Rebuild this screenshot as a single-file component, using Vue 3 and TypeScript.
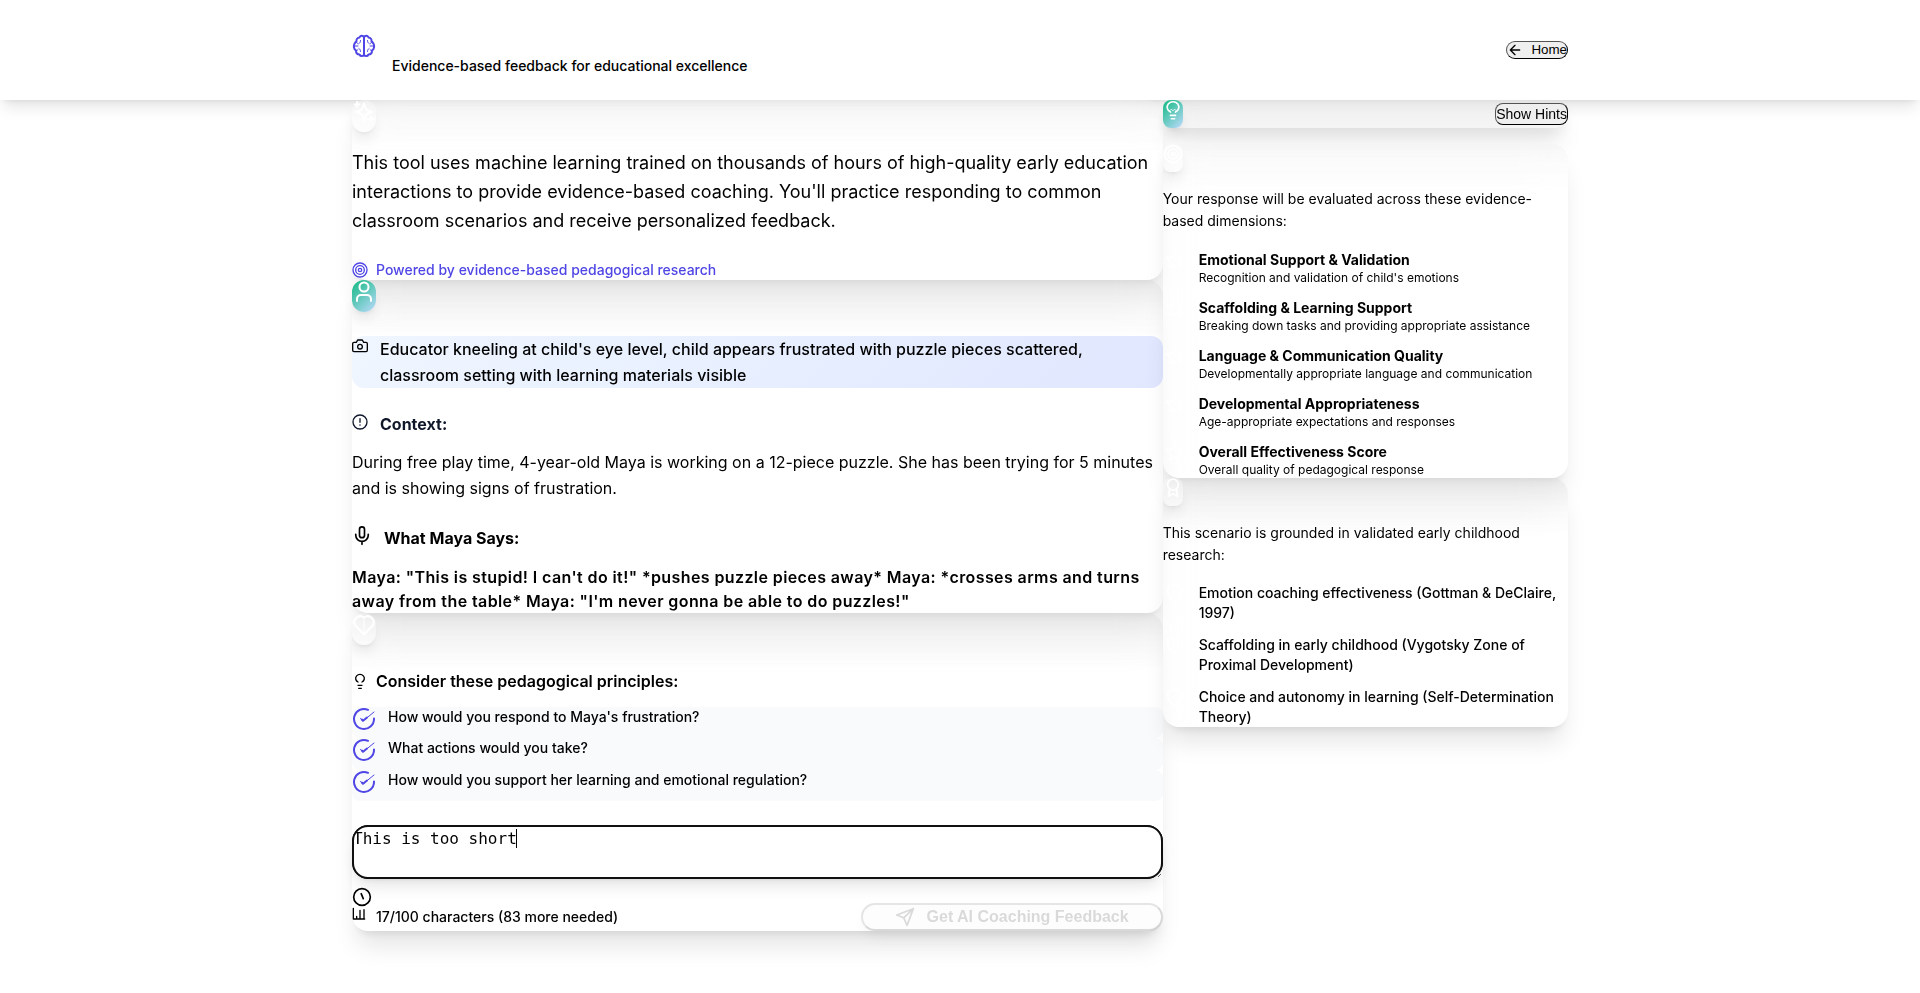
<script setup lang="ts">
import { computed, nextTick, onMounted, ref } from 'vue'

const answer = ref('This is too short')
const box = ref<HTMLTextAreaElement | null>(null)

const caretColumn = computed(() => `${answer.value.length}ch`)

const questions = [
  "How would you respond to Maya's frustration?",
  'What actions would you take?',
  'How would you support her learning and emotional regulation?',
]

const dimensions = [
  { name: 'Emotional Support & Validation', text: "Recognition and validation of child's emotions" },
  { name: 'Scaffolding & Learning Support', text: 'Breaking down tasks and providing appropriate assistance' },
  { name: 'Language & Communication Quality', text: 'Developmentally appropriate language and communication' },
  { name: 'Developmental Appropriateness', text: 'Age-appropriate expectations and responses' },
  { name: 'Overall Effectiveness Score', text: 'Overall quality of pedagogical response' },
]

const sources = [
  'Emotion coaching effectiveness (Gottman & DeClaire, 1997)',
  'Scaffolding in early childhood (Vygotsky Zone of Proximal Development)',
  'Choice and autonomy in learning (Self-Determination Theory)',
]

onMounted(async () => {
  await nextTick()
  const el = box.value
  if (el) {
    el.focus({ preventScroll: true })
    el.setSelectionRange(el.value.length, el.value.length)
  }
})
</script>

<template>
  <div class="page">
    <header class="top">
      <div class="wrap top-row">
        <div class="brand">
          <svg class="i24 indigo brand-icon" viewBox="0 0 24 24">
            <path d="M12 2.500v19" />
            <path d="M12 3.500C11.500 1.500 8.500 1 7.500 3.500 5.500 3.500 4 5.500 4.500 7.500 2.500 8.500 1.500 11.500 2 13.500c.3 1.500 1.200 2.500 2 3 0 2.500 1.500 4 3.500 4 1 2.300 4 2 4.500 0" />
            <path d="M12 3.500c.5-2 3.500-2.500 4.500 0 2 0 3.500 2 3 4 2 1 3 4 2.500 6-.3 1.500-1.200 2.500-2 3 0 2.500-1.500 4-3.500 4-1 2.300-4 2-4.500 0" />
            <path class="thin" d="M4.500 8c0 1 .6 1.500 1.500 1.800M4 16.500c.8 0 1.500-.3 2-.8M8.500 6.500C8.500 8 8 9 7 9.500M8.500 17.500c0-1.500-.5-2.500-1.500-3M19.500 8c0 1-.6 1.500-1.500 1.800M20 16.500c-.8 0-1.500-.3-2-.8M15.500 6.500c0 1.500.5 2.500 1.500 3M15.500 17.500c0-1.500.5-2.500 1.500-3M2.500 12H6M21.500 12H18" />
          </svg>
          <p class="tagline">Evidence-based feedback for educational excellence</p>
        </div>
        <button class="home" type="button">
          <svg class="i16" viewBox="0 0 24 24"><path d="M19 12H5M12 19l-7-7 7-7" /></svg>
          Home
        </button>
      </div>
    </header>

    <main class="wrap grid">
      <div class="col">
        <section class="card">
          <div class="badge pale">
            <svg class="i24" viewBox="0 0 24 24">
              <path d="M12 3.500l1.700 5a2.500 2.500 0 0 0 1.600 1.600l5 1.900-5 1.700a2.500 2.500 0 0 0-1.600 1.600L12 20.500l-1.700-5.200a2.500 2.500 0 0 0-1.600-1.600l-5-1.700 5-1.900a2.500 2.500 0 0 0 1.600-1.600zM5 2v5M2.500 4.500h5M19 16.500v5M16.500 19h5" />
            </svg>
          </div>
          <p class="intro">
            This tool uses machine learning trained on thousands of hours of high-quality early education
            interactions to provide evidence-based coaching. You'll practice responding to common classroom
            scenarios and receive personalized feedback.
          </p>
          <p class="powered">
            <svg class="i16" viewBox="0 0 24 24"><circle cx="12" cy="12" r="10.500" /><circle cx="12" cy="12" r="6.500" /><circle cx="12" cy="12" r="2.500" /></svg>
            Powered by evidence-based pedagogical research
          </p>
        </section>

        <section class="card shaded">
          <div class="badge mint">
            <svg class="i24" viewBox="0 0 24 24"><circle cx="12" cy="7" r="4.500" /><path d="M5 21v-2a4 4 0 0 1 4-4h6a4 4 0 0 1 4 4v2" /></svg>
          </div>
          <div class="scene">
            <svg class="i16 lead-icon" viewBox="0 0 24 24">
              <path d="M8.500 3h7l2 3.500H21A2 2 0 0 1 23 8.500v10a2 2 0 0 1-2 2H3a2 2 0 0 1-2-2v-10a2 2 0 0 1 2-2h3.500z" /><circle cx="12" cy="13" r="3.500" />
            </svg>
            <p>
              Educator kneeling at child's eye level, child appears frustrated with puzzle pieces scattered,
              classroom setting with learning materials visible
            </p>
          </div>
          <h3 class="context-title">
            <svg class="i16 lead-icon" viewBox="0 0 24 24"><circle cx="12" cy="12" r="10.500" /><path d="M12 7v5.500M12 16.200v.6" /></svg>
            Context:
          </h3>
          <p class="context">
            During free play time, 4-year-old Maya is working on a 12-piece puzzle. She has been trying for 5
            minutes and is showing signs of frustration.
          </p>
          <h3 class="says-title">
            <svg class="i20" viewBox="0 0 24 24"><rect x="9" y="1" width="6" height="13" rx="3" /><path d="M4.500 10v1a7.500 7.500 0 0 0 15 0v-1M12 18.500V22" /></svg>
            What Maya Says:
          </h3>
          <p class="quote">
            Maya: "This is stupid! I can't do it!" *pushes puzzle pieces away* Maya: *crosses arms and turns
            away from the table* Maya: "I'm never gonna be able to do puzzles!"
          </p>
        </section>

        <section class="card shaded">
          <div class="badge pale">
            <svg class="i24" viewBox="0 0 24 24"><path d="M12 21.500l-8.500-8.800A6 6 0 0 1 12 4.500a6 6 0 0 1 8.500 8.200z" /><path class="thin" d="M12 5v16" /></svg>
          </div>
          <h3 class="consider">
            <svg class="i16" viewBox="0 0 24 24"><path d="M9 13.500a6.500 6 0 1 1 6 0M9 18.500h6M10 23h4" /></svg>
            Consider these pedagogical principles:
          </h3>
          <ul class="questions">
            <li v-for="q in questions" :key="q">
              <svg class="i24 indigo" viewBox="0 0 24 24"><path d="M22 11.500V12a10 10 0 1 1-6-9.200" /><path class="thin" d="M8.500 11.500l2.500 2.500 11-9" /><path d="M9.800 12.500l1.200 1.200 4-3.200" /></svg>
              <span>{{ q }}</span>
            </li>
          </ul>
          <div class="answer-box">
            <textarea ref="box" v-model="answer" class="answer" rows="2" aria-label="Your response" spellcheck="false"></textarea>
            <span class="caret" :style="{ left: caretColumn }" aria-hidden="true"></span>
          </div>
          <div class="foot">
            <div>
              <svg class="i20" viewBox="0 0 24 24"><circle cx="12" cy="12" r="10" /><path d="M11 8l2.500 6" /></svg>
              <p class="count">
                <svg class="i16" viewBox="0 0 24 24"><path d="M2 2v16h17M7 18V14M12 18V5M18 18V4" /></svg>
                17/100 characters (83 more needed)
              </p>
            </div>
            <button class="send" type="button" disabled>
              <svg class="i20" viewBox="0 0 24 24"><path d="M22 2L2 9.500l8.500 3.500L14.500 22zM22 2L10.500 13" /></svg>
              Get AI Coaching Feedback
            </button>
          </div>
        </section>
      </div>

      <aside class="col">
        <section class="card hints">
          <div class="badge small mint">
            <svg class="i20" viewBox="0 0 24 24"><path d="M9 14.500A7 6.500 0 1 1 15 14.500M9 18.500h6M10 22.500h4" /><path class="thin" d="M8.500 12.500l1.500-1.500 2 2 2-2 1.500 1.500" /></svg>
          </div>
          <button class="hint-button" type="button">Show Hints</button>
        </section>

        <section class="card">
          <div class="badge small pale">
            <svg class="i20" viewBox="0 0 24 24"><circle cx="12" cy="12" r="10" /><circle cx="12" cy="12" r="6" /><circle cx="12" cy="12" r="2" /></svg>
          </div>
          <p class="note">Your response will be evaluated across these evidence-based dimensions:</p>
          <ul class="items">
            <li v-for="d in dimensions" :key="d.name">
              <svg class="i20 ghost" viewBox="0 0 24 24"><path d="M12 2l3 6.300 7 1-5 4.800 1.200 6.900L12 17.700 5.800 21 7 14.100 2 9.300l7-1z" /></svg>
              <div>
                <h4>{{ d.name }}</h4>
                <p>{{ d.text }}</p>
              </div>
            </li>
          </ul>
        </section>

        <section class="card shaded">
          <div class="badge small pale">
            <svg class="i20" viewBox="0 0 24 24"><circle cx="12" cy="8" r="6.500" /><path d="M8 13.500L6.500 22l5.500-3 5.500 3-1.500-8.500" /></svg>
          </div>
          <p class="note">This scenario is grounded in validated early childhood research:</p>
          <ul class="items sources">
            <li v-for="s in sources" :key="s">
              <svg class="i20 ghost" viewBox="0 0 24 24"><path d="M12 2l8.500 3v6.500c0 5-3.500 8.500-8.500 10.500-5-2-8.500-5.500-8.500-10.500V5z" /></svg>
              <span>{{ s }}</span>
            </li>
          </ul>
        </section>
      </aside>
    </main>
  </div>
</template>

<style>
body {
  margin: 0;
  background: #fff;
}
</style>

<style scoped>
.page {
  min-height: 100vh;
  font-family: Inter, 'Liberation Sans', sans-serif;
  font-size: 16px;
  line-height: 24px;
  color: #000;
}
p, h3, h4, ul {
  margin: 0;
  padding: 0;
}
ul {
  list-style: none;
}
svg {
  display: block;
  flex: none;
  fill: none;
  stroke: currentColor;
  stroke-width: 2;
  stroke-linecap: round;
  stroke-linejoin: round;
}
.thin {
  stroke-width: 1;
}
.i16 { width: 16px; height: 16px; }
.i20 { width: 20px; height: 20px; }
.i24 { width: 24px; height: 24px; }
.indigo { color: #4f46e5; }
.wrap {
  box-sizing: border-box;
  max-width: 1280px;
  margin: 0 auto;
  padding: 0 32px;
}
.top {
  background: #fff;
  box-shadow: 0 10px 15px -3px rgba(0, 0, 0, 0.1), 0 4px 6px -4px rgba(0, 0, 0, 0.1);
}
.top-row {
  display: flex;
  align-items: center;
  justify-content: space-between;
  height: 100px;
}
.brand {
  display: flex;
  gap: 16px;
}
.tagline {
  padding-top: 32px;
  font-size: 14px;
  line-height: 20px;
  font-weight: 500;
}
.brand-icon {
  margin-top: 10px;
}
button {
  display: flex;
  align-items: center;
  padding: 0;
  font-family: 'Liberation Sans', Arial, sans-serif;
  color: #000;
  background: #efefef;
  border: 2px outset #000;
}
.home {
  gap: 8px;
  border-width: 1px;
  border-radius: 12px;
  line-height: 16px;
}
.grid {
  display: grid;
  grid-template-columns: 2fr 1fr;
  align-items: start;
}
.card {
  background: linear-gradient(rgba(0, 0, 0, 0.015), transparent 48px);
  backdrop-filter: blur(20px);
  border-radius: 16px;
  box-shadow: 0 20px 25px -5px rgba(0, 0, 0, 0.1), 0 8px 10px -6px rgba(0, 0, 0, 0.1);
}
.card.shaded {
  background: linear-gradient(rgba(0, 0, 0, 0.035), transparent 56px);
}
.card.hints {
  background: rgba(0, 0, 0, 0.03);
  box-shadow: 0 20px 25px -5px rgba(0, 0, 0, 0.1), 0 8px 16px -4px rgba(0, 0, 0, 0.1);
}
.badge {
  width: 24px;
  height: 32px;
  border-radius: 12px;
  color: #fff;
  box-shadow: 0 10px 15px -3px rgba(0, 0, 0, 0.1), 0 4px 6px -4px rgba(0, 0, 0, 0.1);
}
.badge.small {
  width: 20px;
  height: 28px;
  border-radius: 8px;
}
.pale {
  background: rgba(255, 255, 255, 0.3);
}
.mint {
  background: linear-gradient(135deg, #10b981, #bfdbfe);
}
.intro {
  padding-top: 16px;
  font-size: 18px;
  line-height: 29px;
}
.powered {
  display: flex;
  align-items: center;
  gap: 8px;
  padding-top: 25px;
  font-size: 14px;
  line-height: 20px;
  font-weight: 500;
  color: #4f46e5;
}
.scene {
  display: flex;
  gap: 12px;
  margin-top: 24px;
  border-radius: 12px;
  background: linear-gradient(135deg, #eff6ff, #e0e7ff);
  font-weight: 500;
  line-height: 26px;
}
.lead-icon {
  margin-top: 2px;
}
h3 {
  display: flex;
  font-size: 16px;
  line-height: 24px;
  font-weight: 700;
}
.context-title {
  gap: 12px;
  margin-top: 24px;
  color: #0f172a;
}
.context {
  padding-top: 13px;
  line-height: 26px;
}
.says-title {
  gap: 12px;
  margin-top: 25px;
}
.quote {
  padding-top: 15px;
  line-height: 24px;
  font-weight: 600;
  letter-spacing: 0.4px;
}
.consider {
  align-items: center;
  gap: 8px;
  padding: 24px 0 14px;
  font-weight: 600;
}
.questions li {
  display: flex;
  gap: 12px;
  min-height: 31px;
  border-radius: 8px;
  background: #f8fafc;
  font-size: 14px;
  line-height: 20px;
  font-weight: 500;
}
.questions li:nth-child(2) {
  min-height: 32px;
}
.answer-box {
  position: relative;
  margin-top: 24px;
  font-family: 'DejaVu Sans Mono', monospace;
}
.answer {
  display: block;
  box-sizing: border-box;
  width: 100%;
  height: 54px;
  margin: 0;
  padding: 1px 0;
  border: 1px solid #101010;
  border-radius: 16px;
  outline: 2px solid #101010;
  outline-offset: -2px;
  background: #fff;
  color: #000;
  caret-color: transparent;
  font: inherit;
  line-height: 24px;
  resize: vertical;
  box-shadow: 0 10px 15px -3px rgba(0, 0, 0, 0.1), 0 4px 6px -4px rgba(0, 0, 0, 0.1);
}
.caret {
  position: absolute;
  top: 4px;
  width: 1px;
  height: 19px;
  background: #000;
}
.foot {
  display: flex;
  align-items: flex-end;
  justify-content: space-between;
  padding-top: 8px;
}
.count {
  display: flex;
  gap: 8px;
  padding-bottom: 4px;
  font-size: 14px;
  line-height: 20px;
  font-weight: 500;
}
.send {
  gap: 12px;
  padding: 0 32px;
  border-radius: 16px;
  font-size: 16px;
  line-height: 24px;
  font-weight: 700;
  opacity: 0.15;
  box-shadow: 0 10px 15px -3px rgba(0, 0, 0, 0.3);
}
.hints {
  display: flex;
  align-items: center;
  justify-content: space-between;
  margin-bottom: 16px;
}
.hint-button {
  border-width: 1px;
  border-radius: 8px;
  font-size: 14px;
  line-height: 20px;
}
.note {
  padding-top: 16px;
  font-size: 14px;
  line-height: 22px;
}
.items {
  display: grid;
  gap: 12px;
  padding-top: 18px;
}
.items li {
  display: flex;
  gap: 14px;
  padding-left: 2px;
}
.items h4 {
  font-size: 14px;
  line-height: 20px;
  font-weight: 700;
}
.items p {
  font-size: 12px;
  line-height: 16px;
}
.items.sources {
  padding-top: 17px;
  font-size: 14px;
  line-height: 20px;
  font-weight: 500;
}
.ghost {
  color: #fff;
}
</style>
